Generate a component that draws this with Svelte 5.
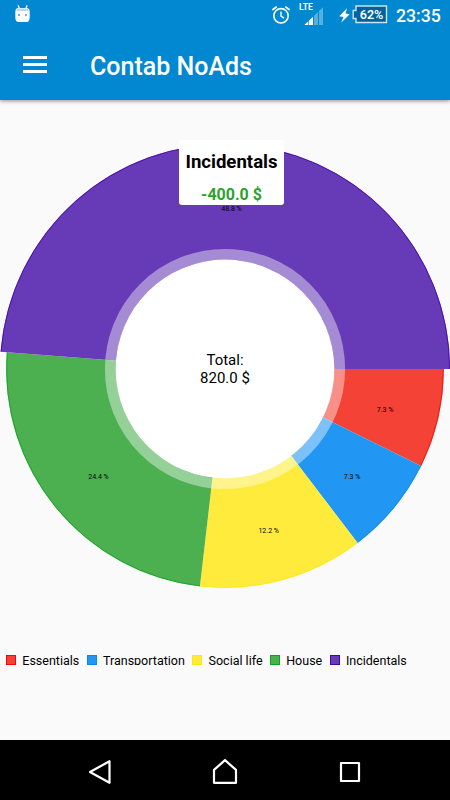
<script>
  const slices = [
    { name: 'Essentials', amount: 60, color: '#f44336', edge: '#f30a08', label: [385, 412] },
    { name: 'Transportation', amount: 60, color: '#2196f3', edge: '#0888f5', label: [352, 479] },
    { name: 'Social life', amount: 100, color: '#ffeb3b', edge: '#ffe714', label: [268.7, 533] },
    { name: 'House', amount: 200, color: '#4caf50', edge: '#0da51b', label: [98.5, 479] },
    { name: 'Incidentals', amount: 400, color: '#673ab7', edge: '#4205aa', label: [231.5, 211], selected: true }
  ];
  const total = slices.reduce((sum, s) => sum + s.amount, 0);
  const cx = 225;
  const cy = 369;

  function point(angle, r) {
    return `${cx + r * Math.cos(angle)} ${cy + r * Math.sin(angle)}`;
  }

  let start = 0;
  const arcs = slices.map((s) => {
    const end = start + (s.amount / total) * Math.PI * 2;
    const r = s.selected ? 225 : 218.8;
    const arc = {
      ...s,
      path: `M${cx} ${cy}L${point(start, r)}A${r} ${r} 0 0 1 ${point(end, r)}Z`,
      rim: `M${point(start, r - 0.4)}A${r - 0.4} ${r - 0.4} 0 0 1 ${point(end, r - 0.4)}`,
      percent: `${((s.amount / total) * 100).toFixed(1)} %`
    };
    start = end;
    return arc;
  });
</script>

<div class="screen">
  <header>
    <div class="status">
      <svg class="droid" width="16" height="20" viewBox="0 0 16 20">
        <path d="M3.2 1.2 4.4 5M12 1.2 10.8 5" stroke="#fff" stroke-width="1.3" />
        <path d="M0.3 8Q0.3 4 3.3 4H11.7Q14.7 4 14.7 8V13Q14.7 18 11.7 18H3.3Q0.3 18 0.3 13Z" fill="#fff" />
        <path d="M2.5 4.5H12.5L13.5 7H1.5Z" fill="#b5daf2" />
        <path d="M3 10h2v2H3zM10 10h2v2h-2z" fill="#6db6e3" />
      </svg>
      <svg class="alarm" width="20" height="20" viewBox="0 0 20 20" fill="none" stroke="#fff">
        <circle cx="10" cy="10.8" r="7.2" stroke-width="1.6" />
        <path d="M10 6.5V11.2L13 13.2" stroke-width="1.4" />
        <path d="M1.4 5 5.7 1.6M18.6 5 14.3 1.6" stroke-width="1.8" />
      </svg>
      <div class="signal">
        <span>LTE</span>
        <svg width="20" height="19" viewBox="0 0 20 19">
          <path d="M0.3 18 4.3 14.2V18ZM5 18V13.5L9 9.7V18Z" fill="#fff" />
          <path d="M10 18V8.7L14 5V18ZM15 18V4L19 0.3V18Z" fill="#55b0df" />
        </svg>
      </div>
      <svg class="bolt" width="11" height="15" viewBox="0 0 11 15">
        <path d="M8 0.3 0.2 8.2 4.5 9 2.2 14.5 10.8 6.2 6.5 5.5Z" fill="#fff" />
      </svg>
      <div class="battery">
        <svg width="36" height="19" viewBox="0 0 36 19">
          <path d="M4 1H34.5V17.5H4V13.5H1.2V5.5H4Z" fill="#01639d" stroke="#c9e4f4" stroke-width="1.4" />
        </svg>
        <b>62%</b>
      </div>
      <span class="clock">23:35</span>
    </div>
    <div class="toolbar">
      <div class="menu"><i></i><i></i><i></i></div>
      <h1>Contab NoAds</h1>
    </div>
  </header>

  <main>
    <div class="chart">
      <svg width="450" height="500" viewBox="0 100 450 500">
        {#each arcs as a}
          <path d={a.path} fill={a.color} />
          <path d={a.rim} fill="none" stroke={a.edge} stroke-width="0.8" />
        {/each}
        <circle {cx} {cy} r="114.7" fill="none" stroke="#fff" stroke-opacity=".41" stroke-width="10.8" />
        <circle {cx} {cy} r="109.4" fill="#fff" />
        {#each arcs as a}
          <text class="pct" x={a.label[0]} y={a.label[1]}>{a.percent}</text>
        {/each}
        <text class="total" x="225" y="365">Total:</text>
        <text class="total" x="225" y="382.5">{total.toFixed(1)} $</text>
      </svg>
      <div class="tip">
        <strong>Incidentals</strong>
        <b>-400.0 $</b>
      </div>
    </div>
    <ul>
      {#each slices as s}
        <li><i style="background:{s.color};border-color:{s.edge}"></i><span>{s.name}</span></li>
      {/each}
    </ul>
  </main>

  <nav>
    <svg width="26" height="28" viewBox="0 0 26 28"><path d="M22.5 3.2V24.8L3 14Z" /></svg>
    <svg width="28" height="28" viewBox="0 0 28 28"><path d="M3 11.8 14 2.2 25 11.8V24.8H3Z" /></svg>
    <svg width="24" height="24" viewBox="0 0 24 24"><path d="M3 3H21V21H3Z" /></svg>
  </nav>
</div>

<style>
  .screen {
    width: 450px;
    height: 800px;
    display: flex;
    flex-direction: column;
    overflow: hidden;
    background: #fafafa;
    color: #000;
    font-family: Roboto, sans-serif;
  }
  svg {
    display: block;
    flex: none;
  }
  header {
    height: 100px;
    flex: none;
    background: #0288d1;
    color: #fff;
    box-shadow: 0 1px 4px rgba(0, 0, 0, 0.45);
    z-index: 1;
  }
  .status {
    height: 32px;
    display: flex;
    align-items: flex-start;
  }
  .droid {
    margin: 4px 0 0 15px;
  }
  .alarm {
    margin: 5px 0 0 240px;
  }
  .signal {
    width: 26px;
    height: 25px;
    margin: 3px 0 0 8px;
    display: flex;
    flex-direction: column;
  }
  .signal span {
    font-size: 8.5px;
    line-height: 8px;
    font-weight: 700;
  }
  .signal svg {
    margin: -4px 0 0 5px;
  }
  .bolt {
    margin: 8px 0 0 14px;
  }
  .battery {
    width: 36px;
    margin: 5px 0 0 2px;
    display: grid;
  }
  .battery > * {
    grid-area: 1 / 1;
  }
  .battery b {
    padding-left: 3px;
    font-size: 12.5px;
    line-height: 19px;
    text-align: center;
    font-weight: 600;
  }
  .clock {
    margin: 5px 0 0 8px;
    font-size: 17.7px;
    line-height: 22px;
    font-weight: 500;
  }
  .toolbar {
    height: 68px;
    display: flex;
    align-items: center;
  }
  .menu {
    width: 24px;
    margin: -3px 43px 0 23px;
    display: flex;
    flex-direction: column;
    gap: 4px;
  }
  .menu i {
    height: 3px;
    background: #fff;
  }
  h1 {
    margin: 2px 0 0;
    font-size: 25px;
    line-height: 30px;
    font-weight: 500;
    white-space: nowrap;
  }
  main {
    height: 640px;
    flex: none;
    display: flex;
    flex-direction: column;
  }
  .chart {
    position: relative;
    height: 500px;
  }
  .pct {
    font-size: 7px;
    text-anchor: middle;
  }
  .total {
    font-size: 15px;
    text-anchor: middle;
  }
  .tip {
    position: absolute;
    left: 179px;
    top: 40px;
    width: 105px;
    height: 65px;
    border-radius: 3px;
    background: #fff;
    display: flex;
    flex-direction: column;
    align-items: center;
    white-space: nowrap;
  }
  .tip strong {
    margin-top: 11px;
    font-size: 18.6px;
    line-height: 22px;
  }
  .tip b {
    margin-top: 12px;
    font-size: 16px;
    line-height: 20px;
    color: #2aa32a;
  }
  ul {
    display: flex;
    margin: 54px 0 0 6px;
    padding: 0;
    gap: 7.4px;
    list-style: none;
    font-size: 12.5px;
    line-height: 14px;
  }
  li {
    display: flex;
    gap: 6.3px;
    height: 11px;
    overflow: hidden;
    white-space: nowrap;
  }
  li i {
    box-sizing: border-box;
    width: 10px;
    height: 10px;
    margin-top: 1px;
    border: 1px solid;
    flex: none;
  }
  li span {
    margin-top: 0;
  }
  nav {
    height: 60px;
    flex: none;
    background: #000;
    display: flex;
    align-items: center;
    padding: 4px 0 0 87px;
    box-sizing: border-box;
  }
  nav svg:nth-child(2) {
    margin: 0 99px 0 98px;
  }
  nav path {
    fill: none;
    stroke: #fff;
    stroke-width: 2.2;
    stroke-linejoin: round;
  }
</style>
